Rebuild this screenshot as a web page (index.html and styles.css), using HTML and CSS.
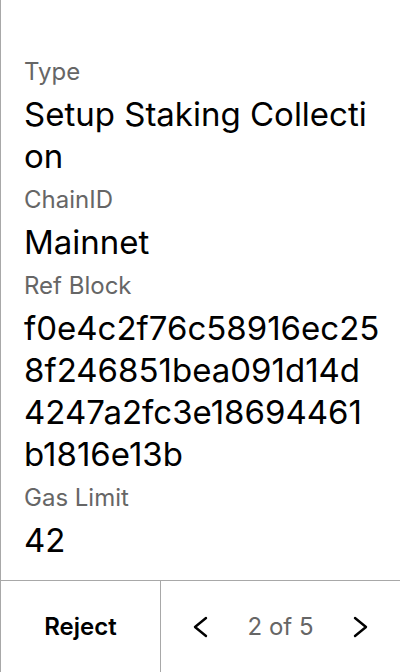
FILE: index.html
```html
<!DOCTYPE html>
<html>
<head>
<meta charset="utf-8">
<link rel="stylesheet" href="styles.css">
</head>
<body>
<div class="screen">
  <main class="details">
    <div class="field">
      <div class="label">Type</div>
      <div class="value">Setup Staking Collection</div>
    </div>
    <div class="field">
      <div class="label">ChainID</div>
      <div class="value">Mainnet</div>
    </div>
    <div class="field">
      <div class="label">Ref Block</div>
      <div class="value">f0e4c2f76c58916ec258f246851bea091d14d4247a2fc3e18694461b1816e13b</div>
    </div>
    <div class="field">
      <div class="label">Gas Limit</div>
      <div class="value">42</div>
    </div>
  </main>
  <footer class="footer">
    <button class="reject">Reject</button>
    <div class="pager">
      <button class="nav" aria-label="Previous">
        <svg width="24" height="24" viewBox="0 0 24 24"><polyline points="17,3 6,12 17,21" fill="none" stroke="#000" stroke-width="2.4" stroke-linecap="round" stroke-linejoin="round"/></svg>
      </button>
      <span class="count">2 of 5</span>
      <button class="nav" aria-label="Next">
        <svg width="24" height="24" viewBox="0 0 24 24"><polyline points="7,3 18,12 7,21" fill="none" stroke="#000" stroke-width="2.4" stroke-linecap="round" stroke-linejoin="round"/></svg>
      </button>
    </div>
  </footer>
</div>
</body>
</html>
```
FILE: styles.css
```css
* { box-sizing: border-box; }
html, body {
  margin: 0;
  padding: 0;
  background: #fff;
}
body {
  font-family: Inter, "Noto Sans", sans-serif;
  color: #000;
}
.screen {
  width: 400px;
  height: 672px;
  display: flex;
  flex-direction: column;
  border-left: 1px solid #a8a8a8;
}
.details {
  flex: 1;
  padding: 56px 19px 0 23px;
  display: flex;
  flex-direction: column;
  gap: 7px;
}
.field {
  display: flex;
  flex-direction: column;
  gap: 5px;
}
.label {
  font-size: 24px;
  line-height: 32px;
  color: #666;
}
.value {
  font-size: 33px;
  line-height: 42px;
  word-break: break-all;
}
.footer {
  height: 92px;
  border-top: 1px solid #a8a8a8;
  display: flex;
}
.reject {
  width: 160px;
  border: none;
  border-right: 1px solid #a8a8a8;
  background: none;
  font-family: inherit;
  font-size: 24px;
  font-weight: 600;
  color: #000;
  padding: 0;
}
.pager {
  flex: 1;
  display: flex;
  align-items: center;
  justify-content: space-between;
  padding: 0 20px;
}
.nav {
  width: 40px;
  height: 40px;
  border: none;
  background: none;
  padding: 0;
  display: flex;
  align-items: center;
  justify-content: center;
}
.count {
  font-size: 24px;
  color: #666;
}
```
